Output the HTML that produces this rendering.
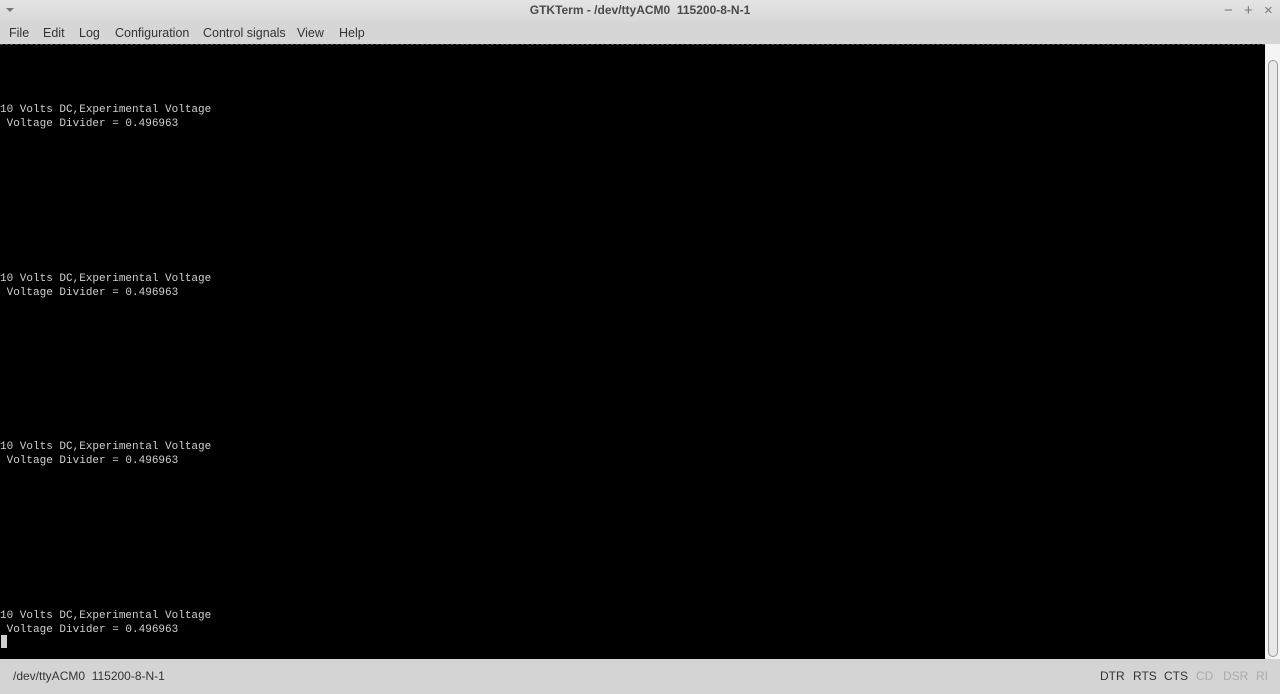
<!DOCTYPE html>
<html><head><style>
*{margin:0;padding:0;box-sizing:border-box}
body{width:1280px;height:694px;overflow:hidden;background:#d4d4d4;font-family:"Liberation Sans","DejaVu Sans",sans-serif;position:relative}
#title{position:absolute;left:0;top:0;width:1280px;height:22px;background:linear-gradient(#e4e4e4,#d8d8d8);text-align:center;font-size:12px;font-weight:bold;color:#4a4a4a;line-height:21px}
#menu{position:absolute;left:0;top:22px;width:1280px;height:22px;background:#d6d6d6;font-size:12.5px;color:#333;line-height:20px}
#menu span{position:absolute;top:1px}
#term{position:absolute;left:0;top:44px;width:1265px;height:615px;background:#000;border-top:1px dashed #444}
#sb{position:absolute;left:1265px;top:44px;width:15px;height:615px;background:#f4f4f4}
#thumb{position:absolute;left:1268px;top:60px;width:10px;height:597px;border:1px solid #999;border-radius:5px;background:#e8e8e8}
.l{position:absolute;left:0;font-family:"Liberation Mono","DejaVu Sans Mono",monospace;font-size:11px;color:#d0d0d0;white-space:pre;line-height:14px}
#status{position:absolute;left:0;top:659px;width:1280px;height:35px;background:#d4d4d4;font-size:12px;color:#333;line-height:35px}
.ctl{position:absolute;top:0;font-size:12px}
.ic{position:absolute;top:2px;color:#777;font-size:15px}
</style></head><body>
<div id="title">GTKTerm - /dev/ttyACM0&nbsp; 115200-8-N-1</div>
<div style="position:absolute;left:6px;top:8px;width:0;height:0;border-left:4px solid transparent;border-right:4px solid transparent;border-top:4px solid #777"></div>
<span class="ic" style="left:1224px">−</span><span class="ic" style="left:1244px">+</span><span class="ic" style="left:1264px">×</span>
<div id="menu"><span style="left:9px">File</span><span style="left:43px">Edit</span><span style="left:79px">Log</span><span style="left:115px">Configuration</span><span style="left:203px">Control signals</span><span style="left:297px">View</span><span style="left:339px">Help</span></div>
<div id="term"></div>
<div id="sb"></div><div id="thumb"></div>
<div class="l" style="top:103px">10 Volts DC,Experimental Voltage</div>
<div class="l" style="top:117px"> Voltage Divider = 0.496963</div>
<div class="l" style="top:271.5px">10 Volts DC,Experimental Voltage</div>
<div class="l" style="top:285.5px"> Voltage Divider = 0.496963</div>
<div class="l" style="top:440px">10 Volts DC,Experimental Voltage</div>
<div class="l" style="top:454px"> Voltage Divider = 0.496963</div>
<div class="l" style="top:608.5px">10 Volts DC,Experimental Voltage</div>
<div class="l" style="top:622.5px"> Voltage Divider = 0.496963</div>
<div style="position:absolute;left:1px;top:635px;width:6px;height:13px;background:#d0d0d0"></div>
<div id="status"><span style="position:absolute;left:13px">/dev/ttyACM0&nbsp; 115200-8-N-1</span>
<span class="ctl" style="left:1100px">DTR</span><span class="ctl" style="left:1133px">RTS</span><span class="ctl" style="left:1164px">CTS</span><span class="ctl" style="left:1196px;color:#aaa">CD</span><span class="ctl" style="left:1223px;color:#aaa">DSR</span><span class="ctl" style="left:1256px;color:#aaa">RI</span></div>
</body></html>
